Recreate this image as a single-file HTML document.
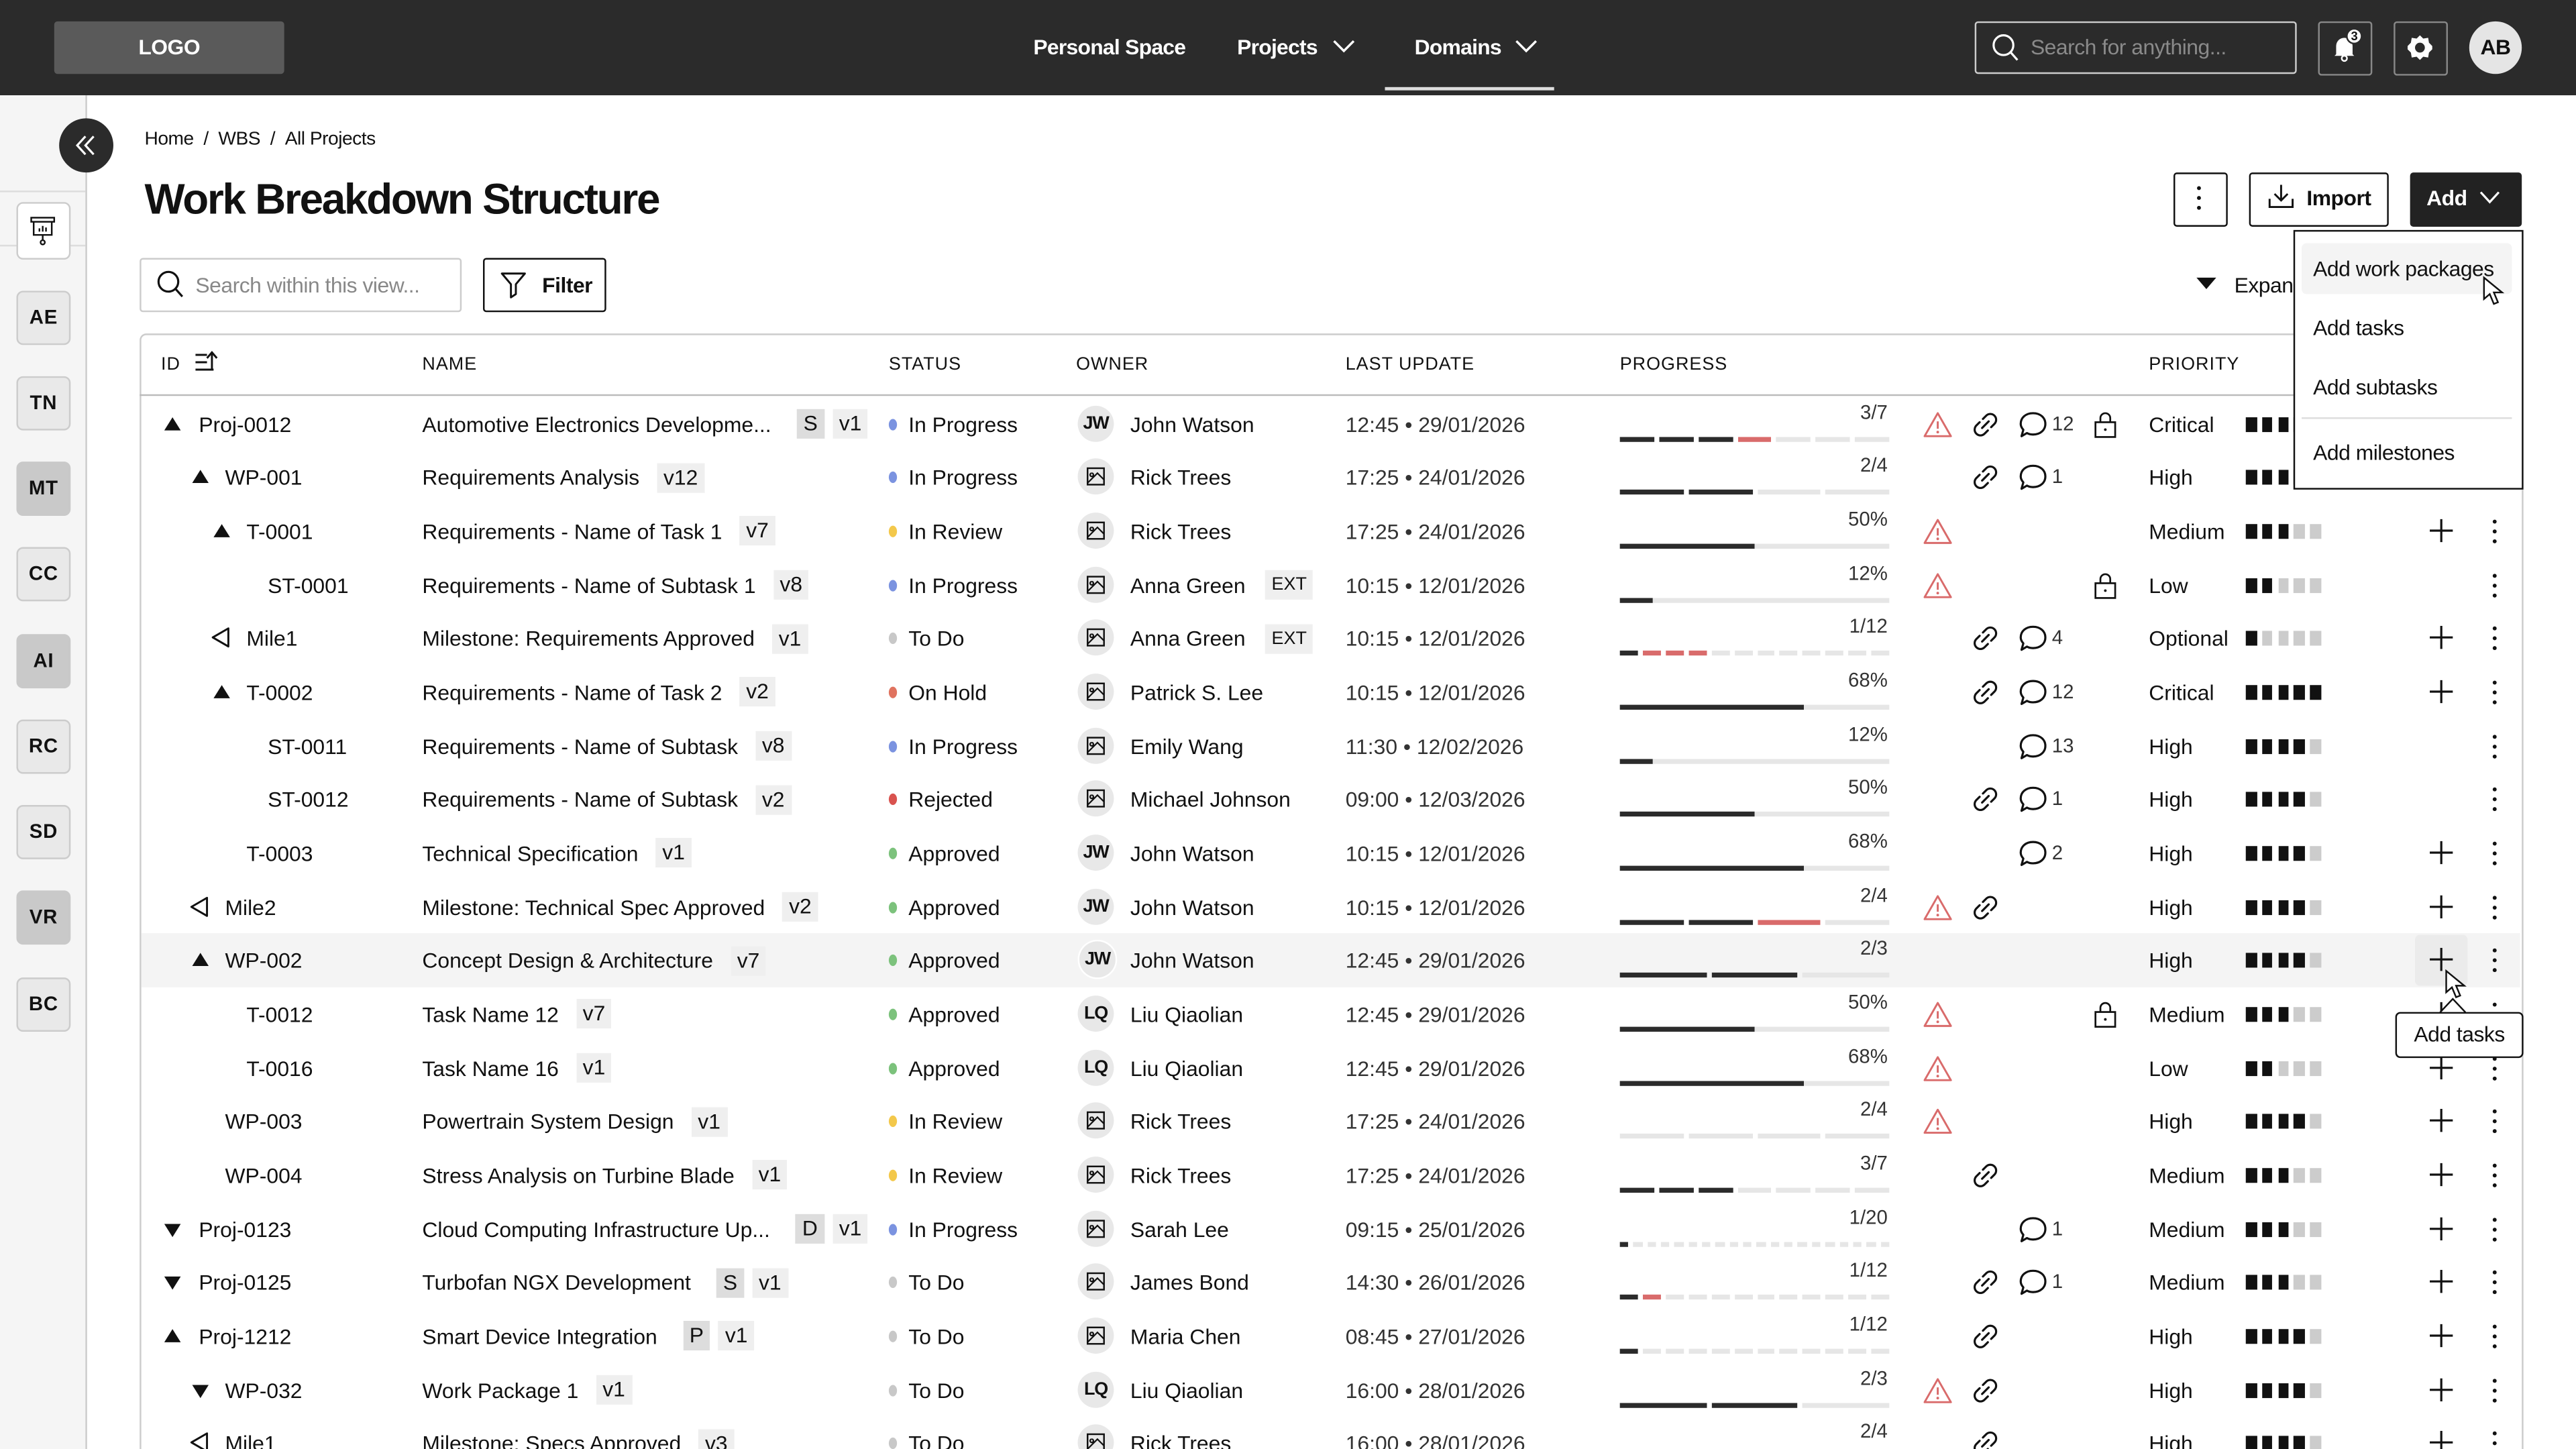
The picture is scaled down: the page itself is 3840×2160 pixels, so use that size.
<!DOCTYPE html>
<html><head><meta charset="utf-8"><style>
html,body{margin:0;padding:0;width:3840px;height:2160px;overflow:hidden;background:#fff}
#w{position:relative;width:1568px;height:882px;transform:scale(2.44898);transform-origin:0 0;overflow:hidden;font-family:"Liberation Sans",sans-serif;color:#111;font-size:13px;letter-spacing:-0.2px}
.abs{position:absolute}
.top{left:0;top:0;width:1568px;height:58px;background:#2b2b2b}
.side{left:0;top:58px;width:52px;height:824px;background:#f5f5f5;border-right:1px solid #ccc}
.sb{position:absolute;left:10px;width:31px;height:31px;border:1px solid #ccc;border-radius:4px;background:#e9e9e9;font-size:12px;font-weight:bold;text-align:center;line-height:31px;letter-spacing:0.3px}
.sb.dk{background:#c9c9c9;border-color:#c9c9c9}
.r{position:absolute;left:0;width:1568px;height:33px;letter-spacing:0}
.a{position:absolute;top:0;line-height:33px;white-space:nowrap}
.t{display:inline-block;background:#efefef;padding:0 4px;line-height:18px;margin-left:7px;font-weight:normal;vertical-align:middle;position:relative;top:-1px}
.t.d{background:#ddd;margin-left:12px}
.t.d+.t{margin-left:5px}
.st i{display:inline-block;width:5px;height:7px;border-radius:50%;margin:0 7px 0 2px;vertical-align:middle;position:relative;top:-1px}
.av{position:absolute;left:656px;top:5px;width:22px;height:22px;border-radius:50%;background:#e8e8e8;font-size:11px;font-weight:bold;text-align:center;line-height:22px;letter-spacing:-0.5px}
.av svg{position:absolute;left:5px;top:5px}
.dt{color:#333}
.pl{position:absolute;right:419px;top:3px;font-size:12px;line-height:12px;color:#333}
.pb{position:absolute;left:986px;top:24px;width:164px;height:3px;display:flex;gap:3px}
.pb i{flex:1;background:#e6e6e6}
.pb i.k{background:#2b2b2b}.pb i.x{background:#d96b6b}
.pp{position:absolute;left:986px;top:24px;width:164px;height:3px;background:#e6e6e6}
.pp i{display:block;height:3px;background:#2b2b2b}
.ic{position:absolute;top:7px;width:19px;height:19px}
.cn{position:absolute;left:1249px;top:0;line-height:33px;font-size:12px;color:#333}
.pr{position:absolute;left:1367px;top:12px;height:9px;display:flex;gap:3.3px}
.pr i{width:6.5px;height:9px;background:#111}.pr i.o{background:#ccc}
.cu,.cd{position:absolute;top:12px;width:0;height:0;border-left:5px solid transparent;border-right:5px solid transparent}
.cu{border-bottom:8px solid #111}.cd{top:13px;border-top:8px solid #111}
.ms{position:absolute;top:9px}
.pl2{position:absolute;left:1478px;top:8px}
.kb{position:absolute;left:1517px;top:9px;width:3px;height:15px}
.btn{position:absolute;border:1px solid #111;border-radius:2px;background:#fff}
</style></head><body><div id="w">
<svg width="0" height="0" style="position:absolute">
<symbol id="warn" viewBox="0 0 19 19"><path d="M9.5 2.5 L17.5 16.5 H1.5 Z" fill="none" stroke="#d96b6b" stroke-width="1.2" stroke-linejoin="round"/><path d="M9.5 7.5 V12" stroke="#d96b6b" stroke-width="1.2"/><circle cx="9.5" cy="14" r="0.8" fill="#d96b6b"/></symbol>
<symbol id="link" viewBox="0 0 19 19"><path d="M7.5 11.5 L11.5 7.5 M8 6 L10 4 A3 3 0 0 1 15 9 L13 11 M11 13 L9 15 A3 3 0 0 1 4 10 L6 8" fill="none" stroke="#111" stroke-width="1.3" stroke-linecap="round"/></symbol>
<symbol id="cmt" viewBox="0 0 19 19"><path d="M9.5 2.5 C14 2.5 17 5.3 17 9 C17 12.7 14 15.5 9.5 15.5 C8 15.5 6.8 15.2 5.8 14.6 L2.5 16.5 L3.6 12.6 C2.7 11.6 2 10.4 2 9 C2 5.3 5 2.5 9.5 2.5 Z" fill="none" stroke="#111" stroke-width="1.3" stroke-linejoin="round"/></symbol>
<symbol id="lock" viewBox="0 0 19 19"><rect x="3.5" y="8" width="12" height="9" fill="none" stroke="#111" stroke-width="1.1"/><path d="M6.5 8 V5.5 A3 3 0 0 1 12.5 5.5 V8" fill="none" stroke="#111" stroke-width="1.1"/><circle cx="9.5" cy="12.5" r="0.8" fill="#111"/></symbol>
<symbol id="plus" viewBox="0 0 16 16"><path d="M8 1 V15 M1 8 H15" stroke="#111" stroke-width="1.3"/></symbol>
<symbol id="kebab" viewBox="0 0 3 15"><circle cx="1.5" cy="1.5" r="1.2" fill="#111"/><circle cx="1.5" cy="7.5" r="1.2" fill="#111"/><circle cx="1.5" cy="13.5" r="1.2" fill="#111"/></symbol>
<symbol id="img" viewBox="0 0 12 12"><rect x="1" y="1" width="10" height="10" fill="none" stroke="#111" stroke-width="1"/><path d="M1 10 L7 4 L11 8 M3.5 4 a1 1 0 1 0 0.1 0" fill="none" stroke="#111" stroke-width="0.9"/></symbol>
<symbol id="mile" viewBox="0 0 12 14"><path d="M11 1.5 L1.5 7 L11 12.5 Z" fill="none" stroke="#111" stroke-width="1.2" stroke-linejoin="round"/></symbol>
</svg>

<div class="abs top"></div>
<div class="abs" style="left:33px;top:13px;width:140px;height:32px;background:#5a5a5a;border-radius:2px;color:#fff;font-weight:bold;font-size:13px;line-height:32px;text-align:center">LOGO</div>
<div class="abs" style="left:629px;top:21px;color:#fff;font-size:13px;font-weight:bold;letter-spacing:-0.3px">Personal Space</div>
<div class="abs" style="left:753px;top:21px;color:#fff;font-size:13px;font-weight:bold;letter-spacing:-0.3px">Projects</div>
<svg class="abs" style="left:811px;top:24px" width="14" height="9"><path d="M1 1 L7 7 L13 1" fill="none" stroke="#fff" stroke-width="1.4"/></svg>
<div class="abs" style="left:861px;top:21px;color:#fff;font-size:13px;font-weight:bold;letter-spacing:-0.3px">Domains</div>
<svg class="abs" style="left:922px;top:24px" width="14" height="9"><path d="M1 1 L7 7 L13 1" fill="none" stroke="#fff" stroke-width="1.4"/></svg>
<div class="abs" style="left:843px;top:53px;width:103px;height:2px;background:#ddd"></div>
<div class="abs" style="left:1202px;top:13px;width:194px;height:30px;border:1px solid #ccc;border-radius:2px"></div>
<svg class="abs" style="left:1212px;top:20px" width="18" height="18"><circle cx="7.5" cy="7.5" r="6" fill="none" stroke="#fff" stroke-width="1.3"/><path d="M12 12 L16 16.5" stroke="#fff" stroke-width="1.3"/></svg>
<div class="abs" style="left:1236px;top:21px;color:#8a8a8a;font-size:13px">Search for anything...</div>
<div class="abs" style="left:1411px;top:13px;width:31px;height:31px;border:1px solid #888;border-radius:2px"></div>
<svg class="abs" style="left:1418px;top:17px" width="20" height="22"><path d="M4 16 L4 11 A5 5 0 0 1 14 11 L14 16 L15 17 H3 Z" fill="#fff"/><circle cx="9" cy="18.5" r="1.6" fill="none" stroke="#fff"/><circle cx="15" cy="5" r="4.5" fill="#fff" stroke="#2b2b2b" stroke-width="1"/><text x="15" y="7.6" font-size="7.5" font-family="Liberation Sans" font-weight="bold" text-anchor="middle" fill="#111">3</text></svg>
<div class="abs" style="left:1457px;top:13px;width:31px;height:31px;border:1px solid #888;border-radius:2px"></div>
<svg class="abs" style="left:1464px;top:20px" width="18" height="18"><path d="M9 1.5 L11 3.5 L14 3 L14.5 6 L16.5 8 L16.5 10 L14.5 12 L14 15 L11 14.5 L9 16.5 L7 14.5 L4 15 L3.5 12 L1.5 10 L1.5 8 L3.5 6 L4 3 L7 3.5 Z" fill="#fff"/><circle cx="9" cy="9" r="3" fill="#2b2b2b"/></svg>
<div class="abs" style="left:1503px;top:13px;width:32px;height:32px;border-radius:50%;background:#e5e5e5;font-weight:bold;font-size:13px;line-height:32px;text-align:center">AB</div>

<div class="abs side"></div>
<div class="abs" style="left:0;top:116px;width:52px;height:1px;background:#ddd"></div>
<div class="abs" style="left:0;top:149px;width:52px;height:1px;background:#ddd"></div>
<div class="abs" style="left:36px;top:72px;width:33px;height:33px;border-radius:50%;background:#2b2b2b"></div>
<svg class="abs" style="left:44px;top:80px" width="17" height="17"><path d="M8 3 L3 8.5 L8 14 M13 3 L8 8.5 L13 14" fill="none" stroke="#fff" stroke-width="1.3"/></svg>
<div class="abs" style="left:10px;top:123px;width:31px;height:33px;border:1px solid #ccc;border-radius:4px;background:#fff"></div>
<svg class="abs" style="left:17px;top:131px" width="18" height="19"><rect x="2" y="1.5" width="14" height="2.5" fill="none" stroke="#111"/><path d="M3.5 4 V12 H14.5 V4" fill="none" stroke="#111"/><path d="M7 10 V8 M9 10 V6.5 M11 10 V7.5" stroke="#111" stroke-width="1"/><path d="M9 12 V15" stroke="#111"/><circle cx="9" cy="16.5" r="1.3" fill="none" stroke="#111"/></svg>
<div class="sb" style="top:177px">AE</div>
<div class="sb" style="top:229px">TN</div>
<div class="sb dk" style="top:281px">MT</div>
<div class="sb" style="top:333px">CC</div>
<div class="sb dk" style="top:386px">AI</div>
<div class="sb" style="top:438px">RC</div>
<div class="sb" style="top:490px">SD</div>
<div class="sb dk" style="top:542px">VR</div>
<div class="sb" style="top:595px">BC</div>

<div class="abs" style="left:88px;top:79px;font-size:11.5px">Home&nbsp; / &nbsp;WBS&nbsp; / &nbsp;All Projects</div>
<div class="abs" style="left:88px;top:106px;font-size:26px;font-weight:bold;letter-spacing:-0.9px">Work Breakdown Structure</div>
<div class="btn" style="left:1323px;top:105px;width:31px;height:31px"></div>
<svg class="abs" style="left:1337px;top:113px" width="3" height="15"><use href="#kebab"/></svg>
<div class="btn" style="left:1369px;top:105px;width:83px;height:31px"></div>
<svg class="abs" style="left:1380px;top:111px" width="17" height="17"><path d="M8.5 1.5 V11 M4.5 7 L8.5 11 L12.5 7 M1.5 10 V15 H15.5 V10" fill="none" stroke="#111" stroke-width="1.2"/></svg>
<div class="abs" style="left:1404px;top:113px;font-size:13px;font-weight:bold">Import</div>
<div class="abs" style="left:1467px;top:105px;width:68px;height:33px;background:#222;border-radius:2px"></div>
<div class="abs" style="left:1477px;top:113px;font-size:13px;font-weight:bold;color:#fff">Add</div>
<svg class="abs" style="left:1509px;top:116px" width="13" height="9"><path d="M1 1 L6.5 7 L12 1" fill="none" stroke="#fff" stroke-width="1.3"/></svg>

<div class="abs" style="left:85px;top:157px;width:194px;height:31px;border:1px solid #ccc;border-radius:2px"></div>
<svg class="abs" style="left:95px;top:164px" width="18" height="18"><circle cx="7.5" cy="7.5" r="6" fill="none" stroke="#111" stroke-width="1.3"/><path d="M12 12 L16 16.5" stroke="#111" stroke-width="1.3"/></svg>
<div class="abs" style="left:119px;top:166px;color:#888">Search within this view...</div>
<div class="btn" style="left:294px;top:157px;width:73px;height:31px"></div>
<svg class="abs" style="left:304px;top:165px" width="17" height="17"><path d="M1.5 1.5 H15.5 L10 8 V14 L7 16 V8 Z" fill="none" stroke="#111" stroke-width="1.2" stroke-linejoin="round"/></svg>
<div class="abs" style="left:330px;top:166px;font-weight:bold;font-size:13px">Filter</div>
<div class="abs" style="left:1337px;top:169px;width:0;height:0;border-left:6px solid transparent;border-right:6px solid transparent;border-top:7px solid #111"></div>
<div class="abs" style="left:1360px;top:166px">Expand</div>

<div class="abs" style="left:85px;top:203px;width:1449px;height:700px;border:1px solid #ccc;border-radius:4px"></div>
<div class="abs" style="left:85px;top:240px;width:1450px;height:1px;background:#bbb"></div>
<div class="abs" style="left:98px;top:216px;font-size:11px;letter-spacing:0.4px">ID</div>
<svg class="abs" style="left:118px;top:213px" width="16" height="15"><path d="M1 3 H8 M1 7.5 H8 M1 12 H12 M11 12 V2 M8 5 L11 1.5 L14 5" fill="none" stroke="#111" stroke-width="1.2"/></svg>
<div class="abs" style="left:257px;top:216px;font-size:11px;letter-spacing:0.4px">NAME</div>
<div class="abs" style="left:541px;top:216px;font-size:11px;letter-spacing:0.4px">STATUS</div>
<div class="abs" style="left:655px;top:216px;font-size:11px;letter-spacing:0.4px">OWNER</div>
<div class="abs" style="left:819px;top:216px;font-size:11px;letter-spacing:0.4px">LAST UPDATE</div>
<div class="abs" style="left:986px;top:216px;font-size:11px;letter-spacing:0.4px">PROGRESS</div>
<div class="abs" style="left:1308px;top:216px;font-size:11px;letter-spacing:0.4px">PRIORITY</div>

<div class="abs" style="left:86px;top:568px;width:1448px;height:33px;background:#f4f4f4"></div>

<div class="r" style="top:241.5px">
<i class="cu" style="left:100px"></i><span class="a" style="left:121px">Proj-0012</span>
<span class="a" style="left:257px">Automotive Electronics Developme... <b class="t d">S</b><b class="t">v1</b></span>
<span class="a st" style="left:539px"><i style="background:#7b93e0"></i>In Progress</span>
<span class="av">JW</span><span class="a" style="left:688px">John Watson</span>
<span class="a dt" style="left:819px">12:45 • 29/01/2026</span>
<span class="pl">3/7</span><span class="pb"><i class="k"></i><i class="k"></i><i class="k"></i><i class="x"></i><i></i><i></i><i></i></span>
<svg class="ic" style="left:1170px"><use href="#warn"/></svg><svg class="ic" style="left:1199px"><use href="#link"/></svg><svg class="ic" style="left:1228px"><use href="#cmt"/></svg><span class="cn">12</span><svg class="ic" style="left:1272px"><use href="#lock"/></svg>
<span class="a" style="left:1308px">Critical</span><span class="pr"><i></i><i></i><i></i><i></i><i></i></span>
</div>
<div class="r" style="top:274.2px">
<i class="cu" style="left:117px"></i><span class="a" style="left:137px">WP-001</span>
<span class="a" style="left:257px">Requirements Analysis <b class="t">v12</b></span>
<span class="a st" style="left:539px"><i style="background:#7b93e0"></i>In Progress</span>
<span class="av"><svg width="12" height="12"><use href="#img"/></svg></span><span class="a" style="left:688px">Rick Trees</span>
<span class="a dt" style="left:819px">17:25 • 24/01/2026</span>
<span class="pl">2/4</span><span class="pb"><i class="k"></i><i class="k"></i><i></i><i></i></span>
<svg class="ic" style="left:1199px"><use href="#link"/></svg><svg class="ic" style="left:1228px"><use href="#cmt"/></svg><span class="cn">1</span>
<span class="a" style="left:1308px">High</span><span class="pr"><i></i><i></i><i></i><i></i><i class="o"></i></span>
</div>
<div class="r" style="top:306.8px">
<i class="cu" style="left:130px"></i><span class="a" style="left:150px">T-0001</span>
<span class="a" style="left:257px">Requirements - Name of Task 1 <b class="t">v7</b></span>
<span class="a st" style="left:539px"><i style="background:#f3c84b"></i>In Review</span>
<span class="av"><svg width="12" height="12"><use href="#img"/></svg></span><span class="a" style="left:688px">Rick Trees</span>
<span class="a dt" style="left:819px">17:25 • 24/01/2026</span>
<span class="pl">50%</span><span class="pp"><i style="width:50%"></i></span>
<svg class="ic" style="left:1170px"><use href="#warn"/></svg>
<span class="a" style="left:1308px">Medium</span><span class="pr"><i></i><i></i><i></i><i class="o"></i><i class="o"></i></span>
<svg class="pl2" width="16" height="16"><use href="#plus"/></svg><svg class="kb"><use href="#kebab"/></svg>
</div>
<div class="r" style="top:339.5px">
<span class="a" style="left:163px">ST-0001</span>
<span class="a" style="left:257px">Requirements - Name of Subtask 1 <b class="t">v8</b></span>
<span class="a st" style="left:539px"><i style="background:#7b93e0"></i>In Progress</span>
<span class="av"><svg width="12" height="12"><use href="#img"/></svg></span><span class="a" style="left:688px">Anna Green</span><span class="a" style="left:770px"><b class="t" style="margin:0;font-size:11px">EXT</b></span>
<span class="a dt" style="left:819px">10:15 • 12/01/2026</span>
<span class="pl">12%</span><span class="pp"><i style="width:12%"></i></span>
<svg class="ic" style="left:1170px"><use href="#warn"/></svg><svg class="ic" style="left:1272px"><use href="#lock"/></svg>
<span class="a" style="left:1308px">Low</span><span class="pr"><i></i><i></i><i class="o"></i><i class="o"></i><i class="o"></i></span>
<svg class="kb"><use href="#kebab"/></svg>
</div>
<div class="r" style="top:372.2px">
<svg class="ms" style="left:128px" width="12" height="14"><use href="#mile"/></svg><span class="a" style="left:150px">Mile1</span>
<span class="a" style="left:257px">Milestone: Requirements Approved <b class="t">v1</b></span>
<span class="a st" style="left:539px"><i style="background:#c8c8c8"></i>To Do</span>
<span class="av"><svg width="12" height="12"><use href="#img"/></svg></span><span class="a" style="left:688px">Anna Green</span><span class="a" style="left:770px"><b class="t" style="margin:0;font-size:11px">EXT</b></span>
<span class="a dt" style="left:819px">10:15 • 12/01/2026</span>
<span class="pl">1/12</span><span class="pb"><i class="k"></i><i class="x"></i><i class="x"></i><i class="x"></i><i></i><i></i><i></i><i></i><i></i><i></i><i></i><i></i></span>
<svg class="ic" style="left:1199px"><use href="#link"/></svg><svg class="ic" style="left:1228px"><use href="#cmt"/></svg><span class="cn">4</span>
<span class="a" style="left:1308px">Optional</span><span class="pr"><i></i><i class="o"></i><i class="o"></i><i class="o"></i><i class="o"></i></span>
<svg class="pl2" width="16" height="16"><use href="#plus"/></svg><svg class="kb"><use href="#kebab"/></svg>
</div>
<div class="r" style="top:404.8px">
<i class="cu" style="left:130px"></i><span class="a" style="left:150px">T-0002</span>
<span class="a" style="left:257px">Requirements - Name of Task 2 <b class="t">v2</b></span>
<span class="a st" style="left:539px"><i style="background:#e0735f"></i>On Hold</span>
<span class="av"><svg width="12" height="12"><use href="#img"/></svg></span><span class="a" style="left:688px">Patrick S. Lee</span>
<span class="a dt" style="left:819px">10:15 • 12/01/2026</span>
<span class="pl">68%</span><span class="pp"><i style="width:68%"></i></span>
<svg class="ic" style="left:1199px"><use href="#link"/></svg><svg class="ic" style="left:1228px"><use href="#cmt"/></svg><span class="cn">12</span>
<span class="a" style="left:1308px">Critical</span><span class="pr"><i></i><i></i><i></i><i></i><i></i></span>
<svg class="pl2" width="16" height="16"><use href="#plus"/></svg><svg class="kb"><use href="#kebab"/></svg>
</div>
<div class="r" style="top:437.5px">
<span class="a" style="left:163px">ST-0011</span>
<span class="a" style="left:257px">Requirements - Name of Subtask <b class="t">v8</b></span>
<span class="a st" style="left:539px"><i style="background:#7b93e0"></i>In Progress</span>
<span class="av"><svg width="12" height="12"><use href="#img"/></svg></span><span class="a" style="left:688px">Emily Wang</span>
<span class="a dt" style="left:819px">11:30 • 12/02/2026</span>
<span class="pl">12%</span><span class="pp"><i style="width:12%"></i></span>
<svg class="ic" style="left:1228px"><use href="#cmt"/></svg><span class="cn">13</span>
<span class="a" style="left:1308px">High</span><span class="pr"><i></i><i></i><i></i><i></i><i class="o"></i></span>
<svg class="kb"><use href="#kebab"/></svg>
</div>
<div class="r" style="top:470.2px">
<span class="a" style="left:163px">ST-0012</span>
<span class="a" style="left:257px">Requirements - Name of Subtask <b class="t">v2</b></span>
<span class="a st" style="left:539px"><i style="background:#d9534f"></i>Rejected</span>
<span class="av"><svg width="12" height="12"><use href="#img"/></svg></span><span class="a" style="left:688px">Michael Johnson</span>
<span class="a dt" style="left:819px">09:00 • 12/03/2026</span>
<span class="pl">50%</span><span class="pp"><i style="width:50%"></i></span>
<svg class="ic" style="left:1199px"><use href="#link"/></svg><svg class="ic" style="left:1228px"><use href="#cmt"/></svg><span class="cn">1</span>
<span class="a" style="left:1308px">High</span><span class="pr"><i></i><i></i><i></i><i></i><i class="o"></i></span>
<svg class="kb"><use href="#kebab"/></svg>
</div>
<div class="r" style="top:502.8px">
<span class="a" style="left:150px">T-0003</span>
<span class="a" style="left:257px">Technical Specification <b class="t">v1</b></span>
<span class="a st" style="left:539px"><i style="background:#7cc27c"></i>Approved</span>
<span class="av">JW</span><span class="a" style="left:688px">John Watson</span>
<span class="a dt" style="left:819px">10:15 • 12/01/2026</span>
<span class="pl">68%</span><span class="pp"><i style="width:68%"></i></span>
<svg class="ic" style="left:1228px"><use href="#cmt"/></svg><span class="cn">2</span>
<span class="a" style="left:1308px">High</span><span class="pr"><i></i><i></i><i></i><i></i><i class="o"></i></span>
<svg class="pl2" width="16" height="16"><use href="#plus"/></svg><svg class="kb"><use href="#kebab"/></svg>
</div>
<div class="r" style="top:535.5px">
<svg class="ms" style="left:115px" width="12" height="14"><use href="#mile"/></svg><span class="a" style="left:137px">Mile2</span>
<span class="a" style="left:257px">Milestone: Technical Spec Approved <b class="t">v2</b></span>
<span class="a st" style="left:539px"><i style="background:#7cc27c"></i>Approved</span>
<span class="av">JW</span><span class="a" style="left:688px">John Watson</span>
<span class="a dt" style="left:819px">10:15 • 12/01/2026</span>
<span class="pl">2/4</span><span class="pb"><i class="k"></i><i class="k"></i><i class="x"></i><i></i></span>
<svg class="ic" style="left:1170px"><use href="#warn"/></svg><svg class="ic" style="left:1199px"><use href="#link"/></svg>
<span class="a" style="left:1308px">High</span><span class="pr"><i></i><i></i><i></i><i></i><i class="o"></i></span>
<svg class="pl2" width="16" height="16"><use href="#plus"/></svg><svg class="kb"><use href="#kebab"/></svg>
</div>
<div class="r" style="top:568.2px">
<i class="cu" style="left:117px"></i><span class="a" style="left:137px">WP-002</span>
<span class="a" style="left:257px">Concept Design &amp; Architecture <b class="t">v7</b></span>
<span class="a st" style="left:539px"><i style="background:#7cc27c"></i>Approved</span>
<span class="av" style="border:1px solid #fff;top:4px">JW</span><span class="a" style="left:688px">John Watson</span>
<span class="a dt" style="left:819px">12:45 • 29/01/2026</span>
<span class="pl">2/3</span><span class="pb"><i class="k"></i><i class="k"></i><i></i></span>
<span class="a" style="left:1308px">High</span><span class="pr"><i></i><i></i><i></i><i></i><i class="o"></i></span>
<div class="abs" style="left:1470px;top:1px;width:32px;height:31px;background:#ebebeb;border-radius:3px"></div>
<svg class="pl2" width="16" height="16"><use href="#plus"/></svg><svg class="kb"><use href="#kebab"/></svg>
</div>
<div class="r" style="top:600.8px">
<span class="a" style="left:150px">T-0012</span>
<span class="a" style="left:257px">Task Name 12 <b class="t">v7</b></span>
<span class="a st" style="left:539px"><i style="background:#7cc27c"></i>Approved</span>
<span class="av">LQ</span><span class="a" style="left:688px">Liu Qiaolian</span>
<span class="a dt" style="left:819px">12:45 • 29/01/2026</span>
<span class="pl">50%</span><span class="pp"><i style="width:50%"></i></span>
<svg class="ic" style="left:1170px"><use href="#warn"/></svg><svg class="ic" style="left:1272px"><use href="#lock"/></svg>
<span class="a" style="left:1308px">Medium</span><span class="pr"><i></i><i></i><i></i><i class="o"></i><i class="o"></i></span>
<svg class="pl2" width="16" height="16"><use href="#plus"/></svg><svg class="kb"><use href="#kebab"/></svg>
</div>
<div class="r" style="top:633.5px">
<span class="a" style="left:150px">T-0016</span>
<span class="a" style="left:257px">Task Name 16 <b class="t">v1</b></span>
<span class="a st" style="left:539px"><i style="background:#7cc27c"></i>Approved</span>
<span class="av">LQ</span><span class="a" style="left:688px">Liu Qiaolian</span>
<span class="a dt" style="left:819px">12:45 • 29/01/2026</span>
<span class="pl">68%</span><span class="pp"><i style="width:68%"></i></span>
<svg class="ic" style="left:1170px"><use href="#warn"/></svg>
<span class="a" style="left:1308px">Low</span><span class="pr"><i></i><i></i><i class="o"></i><i class="o"></i><i class="o"></i></span>
<svg class="pl2" width="16" height="16"><use href="#plus"/></svg><svg class="kb"><use href="#kebab"/></svg>
</div>
<div class="r" style="top:666.2px">
<span class="a" style="left:137px">WP-003</span>
<span class="a" style="left:257px">Powertrain System Design <b class="t">v1</b></span>
<span class="a st" style="left:539px"><i style="background:#f3c84b"></i>In Review</span>
<span class="av"><svg width="12" height="12"><use href="#img"/></svg></span><span class="a" style="left:688px">Rick Trees</span>
<span class="a dt" style="left:819px">17:25 • 24/01/2026</span>
<span class="pl">2/4</span><span class="pb"><i></i><i></i><i></i><i></i></span>
<svg class="ic" style="left:1170px"><use href="#warn"/></svg>
<span class="a" style="left:1308px">High</span><span class="pr"><i></i><i></i><i></i><i></i><i class="o"></i></span>
<svg class="pl2" width="16" height="16"><use href="#plus"/></svg><svg class="kb"><use href="#kebab"/></svg>
</div>
<div class="r" style="top:698.8px">
<span class="a" style="left:137px">WP-004</span>
<span class="a" style="left:257px">Stress Analysis on Turbine Blade <b class="t">v1</b></span>
<span class="a st" style="left:539px"><i style="background:#f3c84b"></i>In Review</span>
<span class="av"><svg width="12" height="12"><use href="#img"/></svg></span><span class="a" style="left:688px">Rick Trees</span>
<span class="a dt" style="left:819px">17:25 • 24/01/2026</span>
<span class="pl">3/7</span><span class="pb"><i class="k"></i><i class="k"></i><i class="k"></i><i></i><i></i><i></i><i></i></span>
<svg class="ic" style="left:1199px"><use href="#link"/></svg>
<span class="a" style="left:1308px">Medium</span><span class="pr"><i></i><i></i><i></i><i class="o"></i><i class="o"></i></span>
<svg class="pl2" width="16" height="16"><use href="#plus"/></svg><svg class="kb"><use href="#kebab"/></svg>
</div>
<div class="r" style="top:731.5px">
<i class="cd" style="left:100px"></i><span class="a" style="left:121px">Proj-0123</span>
<span class="a" style="left:257px">Cloud Computing Infrastructure Up... <b class="t d">D</b><b class="t">v1</b></span>
<span class="a st" style="left:539px"><i style="background:#7b93e0"></i>In Progress</span>
<span class="av"><svg width="12" height="12"><use href="#img"/></svg></span><span class="a" style="left:688px">Sarah Lee</span>
<span class="a dt" style="left:819px">09:15 • 25/01/2026</span>
<span class="pl">1/20</span><span class="pb"><i class="k"></i><i></i><i></i><i></i><i></i><i></i><i></i><i></i><i></i><i></i><i></i><i></i><i></i><i></i><i></i><i></i><i></i><i></i><i></i><i></i></span>
<svg class="ic" style="left:1228px"><use href="#cmt"/></svg><span class="cn">1</span>
<span class="a" style="left:1308px">Medium</span><span class="pr"><i></i><i></i><i></i><i class="o"></i><i class="o"></i></span>
<svg class="pl2" width="16" height="16"><use href="#plus"/></svg><svg class="kb"><use href="#kebab"/></svg>
</div>
<div class="r" style="top:764.2px">
<i class="cd" style="left:100px"></i><span class="a" style="left:121px">Proj-0125</span>
<span class="a" style="left:257px">Turbofan NGX Development <b class="t d">S</b><b class="t">v1</b></span>
<span class="a st" style="left:539px"><i style="background:#c8c8c8"></i>To Do</span>
<span class="av"><svg width="12" height="12"><use href="#img"/></svg></span><span class="a" style="left:688px">James Bond</span>
<span class="a dt" style="left:819px">14:30 • 26/01/2026</span>
<span class="pl">1/12</span><span class="pb"><i class="k"></i><i class="x"></i><i></i><i></i><i></i><i></i><i></i><i></i><i></i><i></i><i></i><i></i></span>
<svg class="ic" style="left:1199px"><use href="#link"/></svg><svg class="ic" style="left:1228px"><use href="#cmt"/></svg><span class="cn">1</span>
<span class="a" style="left:1308px">Medium</span><span class="pr"><i></i><i></i><i></i><i class="o"></i><i class="o"></i></span>
<svg class="pl2" width="16" height="16"><use href="#plus"/></svg><svg class="kb"><use href="#kebab"/></svg>
</div>
<div class="r" style="top:796.8px">
<i class="cu" style="left:100px"></i><span class="a" style="left:121px">Proj-1212</span>
<span class="a" style="left:257px">Smart Device Integration <b class="t d">P</b><b class="t">v1</b></span>
<span class="a st" style="left:539px"><i style="background:#c8c8c8"></i>To Do</span>
<span class="av"><svg width="12" height="12"><use href="#img"/></svg></span><span class="a" style="left:688px">Maria Chen</span>
<span class="a dt" style="left:819px">08:45 • 27/01/2026</span>
<span class="pl">1/12</span><span class="pb"><i class="k"></i><i></i><i></i><i></i><i></i><i></i><i></i><i></i><i></i><i></i><i></i><i></i></span>
<svg class="ic" style="left:1199px"><use href="#link"/></svg>
<span class="a" style="left:1308px">High</span><span class="pr"><i></i><i></i><i></i><i></i><i class="o"></i></span>
<svg class="pl2" width="16" height="16"><use href="#plus"/></svg><svg class="kb"><use href="#kebab"/></svg>
</div>
<div class="r" style="top:829.5px">
<i class="cd" style="left:117px"></i><span class="a" style="left:137px">WP-032</span>
<span class="a" style="left:257px">Work Package 1 <b class="t">v1</b></span>
<span class="a st" style="left:539px"><i style="background:#c8c8c8"></i>To Do</span>
<span class="av">LQ</span><span class="a" style="left:688px">Liu Qiaolian</span>
<span class="a dt" style="left:819px">16:00 • 28/01/2026</span>
<span class="pl">2/3</span><span class="pb"><i class="k"></i><i class="k"></i><i></i></span>
<svg class="ic" style="left:1170px"><use href="#warn"/></svg><svg class="ic" style="left:1199px"><use href="#link"/></svg>
<span class="a" style="left:1308px">High</span><span class="pr"><i></i><i></i><i></i><i></i><i class="o"></i></span>
<svg class="pl2" width="16" height="16"><use href="#plus"/></svg><svg class="kb"><use href="#kebab"/></svg>
</div>
<div class="r" style="top:862.2px">
<svg class="ms" style="left:115px" width="12" height="14"><use href="#mile"/></svg><span class="a" style="left:137px">Mile1</span>
<span class="a" style="left:257px">Milestone: Specs Approved <b class="t">v3</b></span>
<span class="a st" style="left:539px"><i style="background:#c8c8c8"></i>To Do</span>
<span class="av"><svg width="12" height="12"><use href="#img"/></svg></span><span class="a" style="left:688px">Rick Trees</span>
<span class="a dt" style="left:819px">16:00 • 28/01/2026</span>
<span class="pl">2/4</span><span class="pb"><i class="k"></i><i class="k"></i><i></i><i></i></span>
<svg class="ic" style="left:1199px"><use href="#link"/></svg>
<span class="a" style="left:1308px">High</span><span class="pr"><i></i><i></i><i></i><i></i><i class="o"></i></span>
<svg class="pl2" width="16" height="16"><use href="#plus"/></svg><svg class="kb"><use href="#kebab"/></svg>
</div>

<svg class="abs" style="left:1485px;top:604px" width="16" height="13"><path d="M0 12.5 L8 4 L16 12.5" fill="#fff" stroke="#111" stroke-width="1"/></svg>
<div class="abs" style="left:1458px;top:616px;width:76px;height:26px;border:1px solid #111;border-radius:3px;background:#fff;text-align:center;line-height:26px;font-size:13px">Add tasks</div>
<svg class="abs" style="left:1488px;top:590px" width="16" height="20"><path d="M1 1 L1 14 L4.5 11 L7 17 L9.5 16 L7 10 L12 10 Z" fill="#fff" stroke="#111" stroke-width="1"/></svg>

<div class="abs" style="left:1396px;top:140px;width:138px;height:156px;background:#fff;border:1px solid #111"></div>
<div class="abs" style="left:1401px;top:148px;width:128px;height:31px;background:#f4f4f4;border-radius:3px"></div>
<div class="abs" style="left:1408px;top:156px">Add work packages</div>
<div class="abs" style="left:1408px;top:192px">Add tasks</div>
<div class="abs" style="left:1408px;top:228px">Add subtasks</div>
<div class="abs" style="left:1401px;top:254px;width:128px;height:1px;background:#ddd"></div>
<div class="abs" style="left:1408px;top:268px">Add milestones</div>
<svg class="abs" style="left:1511px;top:168px" width="16" height="20"><path d="M1 1 L1 14 L4.5 11 L7 17 L9.5 16 L7 10 L12 10 Z" fill="#fff" stroke="#111" stroke-width="1"/></svg>
</div></body></html>
